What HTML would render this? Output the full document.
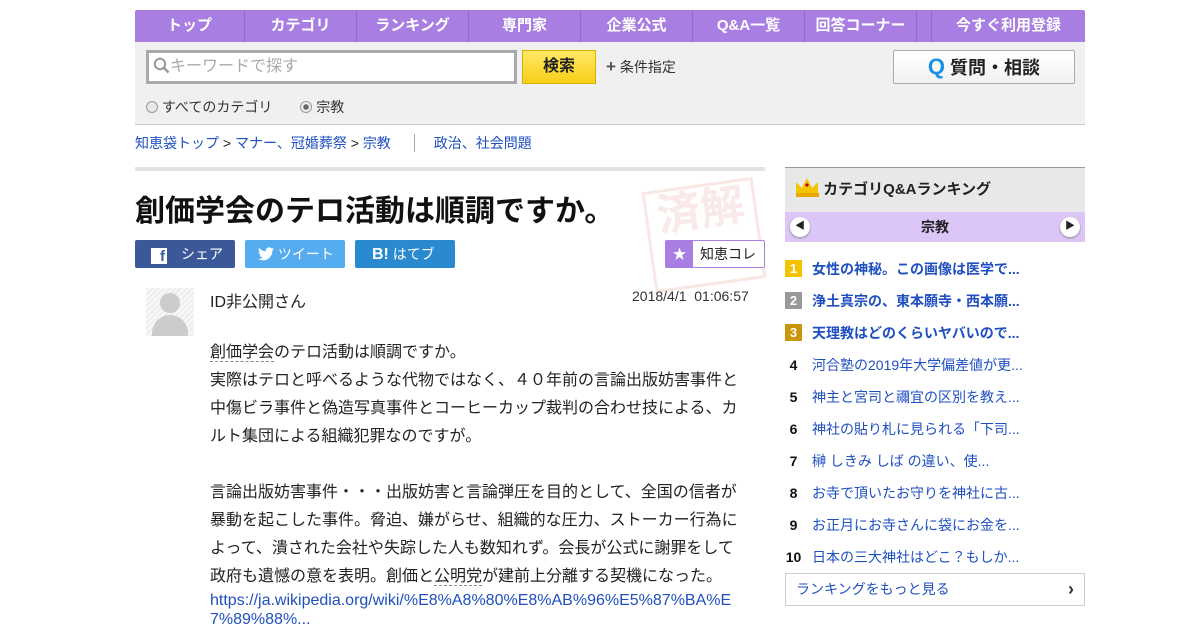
<!DOCTYPE html>
<html><head><meta charset="utf-8"><style>
*{margin:0;padding:0;box-sizing:border-box}
body{width:1200px;height:630px;overflow:hidden;background:#fff;font-family:"Liberation Sans","Noto Sans CJK JP",sans-serif;color:#222;position:relative}
.a{position:absolute}
.nav{left:135px;top:10px;width:950px;height:32px;background:#a87ee2;display:flex;border-radius:2px 2px 0 0}
.nav div{color:#fff;font-weight:bold;font-size:15px;text-align:center;line-height:32px;border-right:1px solid #9468d2}
.bar{left:135px;top:42px;width:950px;height:83px;background:#f0f0f0;border-bottom:1px solid #ccc}
a,.lk{color:#1f4fc0;text-decoration:none}
.rk{left:785px;width:300px;height:32px;font-size:14px;line-height:32px}
.rk b.n{display:inline-block;width:17px;height:17px;line-height:17px;text-align:center;color:#fff;font-size:13px;margin-right:10px;vertical-align:1px}
.rk span.n{display:inline-block;width:17px;text-align:center;color:#111;font-weight:bold;margin-right:10px}
.body{left:210px;top:339px;font-size:16px;line-height:28px;color:#222;width:532px}
</style></head><body>
<div class="a nav">
<div style="width:110px">トップ</div><div style="width:112px">カテゴリ</div><div style="width:112px">ランキング</div><div style="width:112px">専門家</div><div style="width:112px">企業公式</div><div style="width:112px">Q&amp;A一覧</div><div style="width:112px">回答コーナー</div><div style="width:15px"></div><div style="width:153px;border:none">今すぐ利用登録</div>
</div>
<div class="a bar"></div>
<div class="a" style="left:146px;top:50px;width:371px;height:34px;border:3px solid #a9a9a9;background:#fff;font-size:16px;color:#aaa;line-height:28px;padding-left:4px">
<svg width="17" height="17" viewBox="0 0 17 17" style="vertical-align:-3px"><circle cx="7" cy="7" r="5.2" fill="none" stroke="#999" stroke-width="2"/><path d="M11 11l4.5 4.5" stroke="#999" stroke-width="2.4"/></svg>キーワードで探す</div>
<div class="a" style="left:522px;top:50px;width:74px;height:34px;background:linear-gradient(#ffe866,#f8d018);border:1px solid #d8b000;font-weight:bold;font-size:16px;text-align:center;line-height:32px">検索</div>
<div class="a" style="left:606px;top:57px;font-size:14px;color:#333"><b style="font-size:17px;color:#555">+</b> 条件指定</div>
<div class="a" style="left:893px;top:50px;width:182px;height:34px;background:linear-gradient(#fff,#f2f2f2);border:1px solid #aaa;border-radius:2px;text-align:center;font-weight:bold;font-size:18px;line-height:32px"><span style="color:#1a8fe8;font-size:22px">Q</span> 質問・相談</div>
<div class="a" style="left:146px;top:98px;font-size:14px;color:#333;line-height:18px"><span style="display:inline-block;width:12px;height:12px;border:1px solid #999;border-radius:50%;background:#e8e8e8;vertical-align:-1px"></span> すべてのカテゴリ　　<span style="display:inline-block;width:12px;height:12px;border:1px solid #999;border-radius:50%;background:radial-gradient(#666 0 2.5px,#eee 3px);vertical-align:-1px"></span> 宗教</div>
<div class="a" style="left:135px;top:134px;font-size:14px;line-height:18px"><a>知恵袋トップ</a> &gt; <a>マナー、冠婚葬祭</a> &gt; <a>宗教</a> <span style="display:inline-block;width:1px;height:18px;background:#aaa;margin:0 19px;vertical-align:-4px"></span><a>政治、社会問題</a></div>
<div class="a" style="left:135px;top:167px;width:630px;height:4px;background:#e2e2e2"></div>
<div class="a" style="left:648px;top:184px;width:112px;height:102px;border:3px solid rgba(220,120,110,.18);transform:rotate(-8deg);color:rgba(220,120,110,.16);font-size:44px;line-height:48px;text-align:center;font-weight:bold">済解</div>
<div class="a" style="left:135px;top:186px;font-size:30px;font-weight:bold;color:#111">創価学会のテロ活動は順調ですか。</div>
<div class="a" style="left:135px;top:240px;width:100px;height:28px;background:#3b5998;border-radius:2px;color:#fff;font-size:14px;line-height:28px;padding-left:16px"><span style="display:inline-block;width:16px;height:16px;background:#fff;color:#3b5998;font-weight:bold;font-size:15px;line-height:18px;text-align:right;padding-right:2px;vertical-align:-2px">f</span>　シェア</div>
<div class="a" style="left:245px;top:240px;width:100px;height:28px;background:#55acee;border-radius:2px;color:#fff;font-size:14px;line-height:28px;padding-left:13px"><svg width="16" height="14" viewBox="0 0 24 20" style="vertical-align:-2px"><path fill="#fff" d="M24 2.4a10 10 0 0 1-2.8.8A5 5 0 0 0 23.3.4a10 10 0 0 1-3.1 1.2A4.9 4.9 0 0 0 11.8 6 14 14 0 0 1 1.7.9a4.9 4.9 0 0 0 1.5 6.6A4.9 4.9 0 0 1 1 6.9a4.9 4.9 0 0 0 3.9 4.8 5 5 0 0 1-2.2.1 4.9 4.9 0 0 0 4.6 3.4A9.9 9.9 0 0 1 0 17.3 14 14 0 0 0 7.5 19.5c9.1 0 14-7.5 14-14v-.6A10 10 0 0 0 24 2.4z"/></svg> ツイート</div>
<div class="a" style="left:355px;top:240px;width:100px;height:28px;background:#2a8ad0;border-radius:2px;color:#fff;font-size:14px;line-height:28px;padding-left:17px"><b style="font-size:16px">B!</b> はてブ</div>
<div class="a" style="left:665px;top:240px;width:100px;height:28px;border:1px solid #a87ee2;border-radius:2px;background:#fff;font-size:14px;line-height:26px"><span style="display:inline-block;width:27px;height:26px;background:#a87ee2;color:#fff;text-align:center;margin-right:7px">★</span>知恵コレ</div>
<div class="a" style="left:146px;top:288px;width:48px;height:48px;background:repeating-linear-gradient(135deg,#eee 0 2px,#f8f8f8 2px 4px);overflow:hidden"><div class="a" style="left:14px;top:5px;width:20px;height:20px;border-radius:50%;background:#ccc"></div><div class="a" style="left:6px;top:27px;width:36px;height:30px;border-radius:18px 18px 0 0;background:#ccc"></div></div>
<div class="a" style="left:210px;top:288px;font-size:16px">ID非公開さん</div>
<div class="a" style="left:632px;top:288px;font-size:14px;color:#333">2018/4/1&nbsp; 01:06:57</div>
<div class="a body"><span style="border-bottom:1px dashed #888">創価学会</span>のテロ活動は順調ですか。<br>実際はテロと呼べるような代物ではなく、４０年前の言論出版妨害事件と中傷ビラ事件と偽造写真事件とコーヒーカップ裁判の合わせ技による、カルト集団による組織犯罪なのですが。<br><br>言論出版妨害事件・・・出版妨害と言論弾圧を目的として、全国の信者が暴動を起こした事件。脅迫、嫌がらせ、組織的な圧力、ストーカー行為によって、潰された会社や失踪した人も数知れず。会長が公式に謝罪をして<br>政府も遺憾の意を表明。創価と<span style="border-bottom:1px dashed #888">公明党</span>が建前上分離する契機になった。<div class="lk" style="line-height:19px">https://ja.wikipedia.org/wiki/%E8%A8%80%E8%AB%96%E5%87%BA%E<br>7%89%88%...</div></div>
<div class="a" style="left:785px;top:167px;width:300px;height:45px;background:#e8e8e8;border-top:1px solid #999;font-weight:bold;font-size:15px;line-height:44px;padding-left:10px"><svg width="24" height="22" viewBox="0 0 24 22" style="vertical-align:-4px"><path d="M1 6l6 6 5-10 5 10 6-6v13H1z" fill="#f5c400"/><rect x="1" y="17" width="23" height="4" fill="#e8a800"/><circle cx="12" cy="9" r="1.6" fill="#c00"/></svg> カテゴリQ&amp;Aランキング</div>
<div class="a" style="left:785px;top:212px;width:300px;height:30px;background:#dcc6f8;text-align:center;font-weight:bold;font-size:14px;line-height:30px">宗教
<span class="a" style="left:5px;top:5px;width:20px;height:20px;border-radius:50%;background:#fff;box-shadow:0 1px 2px #888;font-size:10px;line-height:20px">◀</span><span class="a" style="right:5px;top:5px;width:20px;height:20px;border-radius:50%;background:#fff;box-shadow:0 1px 2px #888;font-size:10px;line-height:20px">▶</span></div>
<div class="a rk" style="top:253px;font-weight:bold"><b class="n" style="background:#f5c200">1</b><a>女性の神秘。この画像は医学で...</a></div>
<div class="a rk" style="top:285px;font-weight:bold"><b class="n" style="background:#999">2</b><a>浄土真宗の、東本願寺・西本願...</a></div>
<div class="a rk" style="top:317px;font-weight:bold"><b class="n" style="background:#c9960a">3</b><a>天理教はどのくらいヤバいので...</a></div>
<div class="a rk" style="top:349px"><span class="n">4</span><a>河合塾の2019年大学偏差値が更...</a></div>
<div class="a rk" style="top:381px"><span class="n">5</span><a>神主と宮司と禰宜の区別を教え...</a></div>
<div class="a rk" style="top:413px"><span class="n">6</span><a>神社の貼り札に見られる「下司...</a></div>
<div class="a rk" style="top:445px"><span class="n">7</span><a>榊 しきみ しば の違い、使...</a></div>
<div class="a rk" style="top:477px"><span class="n">8</span><a>お寺で頂いたお守りを神社に古...</a></div>
<div class="a rk" style="top:509px"><span class="n">9</span><a>お正月にお寺さんに袋にお金を...</a></div>
<div class="a rk" style="top:541px"><span class="n">10</span><a>日本の三大神社はどこ？もしか...</a></div>
<div class="a" style="left:785px;top:573px;width:300px;height:33px;border:1px solid #ccc;font-size:14px;line-height:31px;padding-left:10px;background:#fff"><a>ランキングをもっと見る</a><span class="a" style="right:10px;top:0;font-weight:bold;color:#333;font-size:18px">›</span></div>
</body></html>
